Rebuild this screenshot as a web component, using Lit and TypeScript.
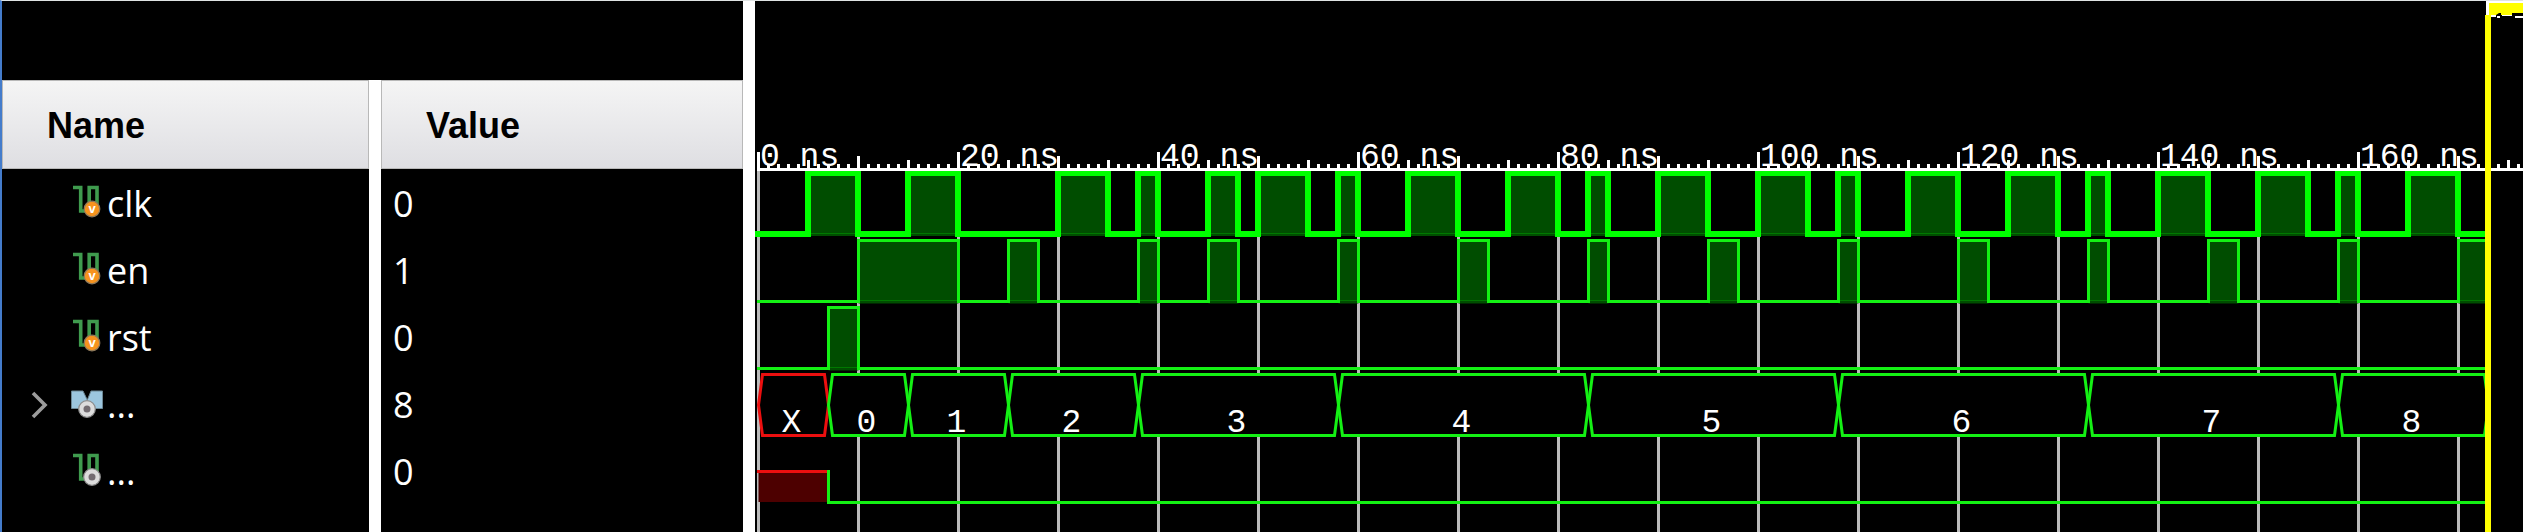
import { LitElement, html, svg, css } from "lit";
import { customElement } from "lit/decorators.js";

type Kind = "input" | "bus" | "probe";
interface Row { name: string; value: string; kind: Kind; expandable?: boolean }

const ROWS: Row[] = [
  { name: "clk", value: "0", kind: "input" },
  { name: "en", value: "1", kind: "input" },
  { name: "rst", value: "0", kind: "input" },
  { name: "...", value: "8", kind: "bus", expandable: true },
  { name: "...", value: "0", kind: "probe" },
];

const END = 173;
const CLK: number[][] = [[5, 10], [15, 20], [30, 35], [38, 40], [45, 48], [50, 55], [58, 60], [65, 70], [75, 80], [83, 85], [90, 95], [100, 105], [108, 110], [115, 120], [125, 130], [133, 135], [140, 145], [150, 155], [158, 160], [165, 170]];
const EN: number[][] = [[10, 20], [25, 28], [38, 40], [45, 48], [58, 60], [70, 73], [83, 85], [95, 98], [108, 110], [120, 123], [133, 135], [145, 148], [158, 160], [170, END]];
const RST: number[][] = [[7, 10]];
const BUS: [number, number, string][] = [[0, 7, "X"], [7, 15, "0"], [15, 25, "1"], [25, 38, "2"], [38, 58, "3"], [58, 83, "4"], [83, 108, "5"], [108, 133, "6"], [133, 158, "7"], [158, END, "8"]];

/* Ten pixels per nanosecond; time zero sits just inside the left edge. */
const X = (t: number) => 3.5 + t * 10;

@customElement("signal-icon")
class SignalIcon extends LitElement {
  static properties = { kind: {} };
  declare kind: Kind;
  static styles = css`
    :host { display: block; width: 34px; height: 34px; }
    svg { display: block; }
    .v { font: bold 13px "Liberation Sans", Arial, sans-serif; fill: #fff; text-anchor: middle; }
  `;
  render() {
    const dot = (x: number, y: number) => svg`
      <circle cx=${x} cy=${y} r="8.3" fill="#dcdcdc" stroke="#8c8c8c" stroke-width="1.2"/>
      <circle cx=${x} cy=${y} r="3.5" fill="#736c71"/>`;
    const pulse = svg`<path d="M2 3.5H9.7V27H15 M18.2 20V3.5H26V20" fill="none" stroke="#3f9b4e" stroke-width="3.6"/>`;
    return html`<svg width="34" height="34" viewBox="0 0 34 34" aria-hidden="true">
      ${this.kind === "bus"
        ? svg`<path d="M0.5 6H12L16.3 15L20 6H31.5V23.5H0.5Z" fill="#9cc6de" stroke="#6d8794" stroke-width="1"/>${dot(16, 24)}`
        : this.kind === "input"
          ? svg`${pulse}<circle cx="21" cy="25" r="7.8" fill="#f7931e" stroke="#8d7a5c" stroke-width="1.2"/><text class="v" x="21" y="29">v</text>`
          : svg`${pulse}${dot(21, 25)}`}
    </svg>`;
  }
}

@customElement("signal-table")
class SignalTable extends LitElement {
  static styles = css`
    :host { display: block; background: #000; color: #fff; box-sizing: border-box; padding-top: 79px; }
    table { width: 100%; height: 100%; border-spacing: 0; table-layout: fixed; }
    .name-col { width: 367px; }
    th, td { padding: 0; text-align: left; box-sizing: border-box; }
    th { height: 89px; padding: 2px 0 0 45px; color: #000; font: bold 36px/40px "Liberation Sans", Arial, sans-serif;
      background: linear-gradient(#f5f5f5, #dedee2); background-clip: padding-box; box-shadow: inset 0 0 0 1px #b8b8b8; }
    td { height: 67px; padding-top: 2px; font: 36px/48px "Open Sans", "Noto Sans", sans-serif; }
    th + th, td + td { border-left: 12px solid #fff; }
    td + td { padding-left: 12px; }
    .filler td { height: auto; }
    .signal { display: flex; align-items: center; }
    signal-icon { margin-bottom: 6px; }
    .toggle { width: 69px; flex: none; display: flex; }
    button { margin-left: 26px; padding: 0; border: 0; background: none; display: flex; cursor: pointer; }
    .label { padding-left: 2px; }
  `;
  render() {
    return html`<table>
      <colgroup><col class="name-col" /><col /></colgroup>
      <thead><tr><th scope="col">Name</th><th scope="col">Value</th></tr></thead>
      <tbody>
        ${ROWS.map((r) => html`<tr>
          <td><div class="signal">
            <span class="toggle">${r.expandable
              ? html`<button aria-label="Expand bus" aria-expanded="false"><svg width="24" height="32" viewBox="0 0 24 32"><path d="M5 4L17 16L5 28" fill="none" stroke="#9c9c9c" stroke-width="3.6"/></svg></button>`
              : ""}</span>
            <signal-icon .kind=${r.kind}></signal-icon>
            <span class="label">${r.name}</span>
          </div></td>
          <td>${r.value}</td>
        </tr>`)}
        <tr class="filler"><td></td><td></td></tr>
      </tbody>
    </table>`;
  }
}

@customElement("wave-view")
class WaveView extends LitElement {
  static styles = css`
    :host { display: block; background: #000; overflow: hidden; }
    svg { display: block; width: 100%; height: 100%; }
    text { font: 33px "Liberation Mono", "Courier New", monospace; fill: #fff; }
    .mid { text-anchor: middle; }
    .grid { stroke: #bbb; stroke-width: 3; }
    .rule { stroke: #fff; stroke-width: 3; }
    .line { fill: none; stroke: #14f014; stroke-width: 3; }
    .thick { stroke: #0f0; stroke-width: 6; }
    .high { fill: #004d00; }
    .base { fill: #007800; }
    .bus { fill: #000; stroke: #14f014; stroke-width: 3; }
    .unknown { stroke: #eb0f0f; }
    .unknown-fill { fill: #4d0000; }
    .cursor { fill: #ff0; }
    .light { fill: #fff; }
  `;

  private digital(pulses: number[][], top: number, low: number, thick = false) {
    const off = thick ? 0.5 : 0;
    let d = `M${thick ? 0 : 2} ${low}`;
    for (const [a, b] of pulses) {
      d += `H${X(a) - off}V${top}H${X(b) - off}`;
      if (b < END) d += `V${low}`;
    }
    if (pulses[pulses.length - 1][1] < END) d += `H${X(END)}`;
    return svg`
      ${pulses.map(([a, b]) => svg`
        <rect class="high" x=${X(a)} y=${top} width=${(b - a) * 10} height=${low + 2 - top}></rect>
        <rect class="base" x=${X(a)} y=${Math.floor(low) - 1} width=${(b - a) * 10} height="1"></rect>`)}
      <path class="line ${thick ? "thick" : ""}" d=${d}></path>`;
  }

  private ruler() {
    const ticks = Array.from({ length: 177 }, (_, t) => t);
    return svg`
      ${ticks.map((t) => {
        const top = t % 20 === 0 ? 151 : t % 10 === 0 ? 155 : t % 5 === 0 ? 159 : 163;
        return svg`<line class="rule" x1=${X(t)} x2=${X(t)} y1=${top} y2="169"></line>`;
      })}
      <line class="rule" x1="2" x2="100%" y1="168.5" y2="168.5"></line>
      ${ticks.filter((t) => t % 20 === 0).map((t) => svg`<text x=${X(t) + 1.5} y="165">${t} ns</text>`)}`;
  }

  private bus() {
    return BUS.map(([a, b, label]) => {
      const l = X(a), r = X(b);
      return svg`
        <path class="bus ${label === "X" ? "unknown" : ""}" d="M${l} 404L${l + 4} 373.5H${r - 4}L${r} 404L${r - 4} 434.5H${l + 4}Z"></path>
        <text class="mid" x=${(l + r) / 2 - 2} y="431">${label}</text>`;
    });
  }

  render() {
    const grid = Array.from({ length: 18 }, (_, i) => i * 10);
    return html`<svg role="img" aria-label="Waveform">
      ${grid.map((t) => svg`<line class="grid" x1=${X(t)} x2=${X(t)} y1="170" y2="100%"></line>`)}
      ${this.digital(CLK, 172, 233, true)}
      ${this.digital(EN, 239.5, 300.5)}
      ${this.digital(RST, 306.5, 367.5)}
      ${this.bus()}
      <rect class="unknown-fill" x=${X(0)} y="470" width="70" height="31"></rect>
      <path class="line" d="M${X(7)} 469V501.5H${X(END)}"></path>
      <line class="line unknown" x1="2" x2=${X(7) - 1.5} y1="470.5" y2="470.5"></line>
      ${this.ruler()}
      <rect class="cursor" x="1730" y="14" width="6" height="100%"></rect>
      <rect class="light" x="1731" y="0" width="3" height="14"></rect>
      <rect class="light" x="1731" y="0" width="100%" height="2"></rect>
      <rect class="cursor" x="1734" y="2" width="100%" height="12"></rect>
      <path d="M1741 14L1744 12H1746V14Z M1757 12H1768V14H1757Z" fill="#000"></path>
      <path class="light" d="M1736 14H1741V16H1736Z M1742 15H1745V17H1742Z M1747 14H1757V15H1747Z M1760 15H1768V17H1760Z"></path>
    </svg>`;
  }
}

@customElement("app-root")
class AppRoot extends LitElement {
  static styles = css`
    :host { display: flex; height: 100vh; box-sizing: border-box; background: #fff;
      border-top: 1px solid #dfe3e3; border-left: 2px solid #447ccb; overflow: hidden; }
    signal-table { flex: none; width: 741px; margin-right: 12px; }
    wave-view { flex: 1; min-width: 0; }
  `;
  render() {
    return html`<signal-table></signal-table><wave-view></wave-view>`;
  }
}
